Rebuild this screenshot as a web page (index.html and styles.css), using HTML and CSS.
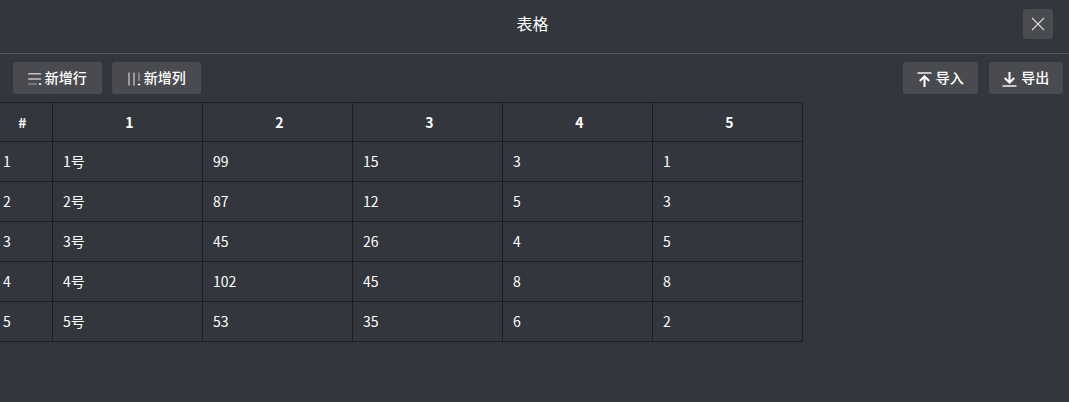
FILE: index.html
```html
<!DOCTYPE html>
<html lang="zh-CN">
<head>
    <meta charset="UTF-8">
    <title>表格</title>
    <link rel="stylesheet" href="styles.css">
</head>
<body>
    <div class="header">
        <span class="title">表格</span>
        <button class="close" aria-label="关闭">
            <svg width="14" height="14" viewBox="0 0 14 14"><path d="M1 1L13 13M13 1L1 13" stroke="#d8d8da" stroke-width="1.1" fill="none"/></svg>
        </button>
    </div>
    <div class="toolbar">
        <div class="group group-add">
            <button class="btn btn-add">
                <svg width="15" height="12" viewBox="0 0 15 12"><path d="M0.250 0.800h12.700M0.250 6h12.700" stroke="#c4c4c7" stroke-width="1.600" fill="none"/><path d="M0.250 11h8.500" stroke="#85858a" stroke-width="1.600" fill="none"/><path d="M10.800 11h2.400M12 10v2" stroke="#fff" stroke-width="1" fill="none"/></svg>
                <span>新增行</span>
            </button>
            <button class="btn btn-add">
                <svg width="15" height="14" viewBox="0 0 15 14"><path d="M2 0.500v13M7 0.500v13" stroke="#a5a5a9" stroke-width="1.800" fill="none"/><path d="M12 0.500v8.500" stroke="#85858a" stroke-width="1.800" fill="none"/><path d="M10.800 12.500h2.400M12 11.500v2" stroke="#fff" stroke-width="1" fill="none"/></svg>
                <span>新增列</span>
            </button>
        </div>
        <div class="group">
            <button class="btn btn-io">
                <svg width="15" height="15" viewBox="0 0 15 15"><path d="M0.500 1h14" stroke="#fff" stroke-width="1.400" fill="none"/><path d="M7.500 15V4.500M2.800 9l4.700-4.700L12.200 9" stroke="#fff" stroke-width="2" fill="none"/></svg>
                <span>导入</span>
            </button>
            <button class="btn btn-io">
                <svg width="15" height="15" viewBox="0 0 15 15"><path d="M0.500 14h14" stroke="#fff" stroke-width="1.400" fill="none"/><path d="M7.500 0v10.500M2.800 6l4.700 4.700L12.200 6" stroke="#fff" stroke-width="2" fill="none"/></svg>
                <span>导出</span>
            </button>
        </div>
    </div>
    <table class="grid">
        <thead>
            <tr><th class="index">#</th><th>1</th><th>2</th><th>3</th><th>4</th><th>5</th></tr>
        </thead>
        <tbody>
            <tr><td>1</td><td>1号</td><td>99</td><td>15</td><td>3</td><td>1</td></tr>
            <tr><td>2</td><td>2号</td><td>87</td><td>12</td><td>5</td><td>3</td></tr>
            <tr><td>3</td><td>3号</td><td>45</td><td>26</td><td>4</td><td>5</td></tr>
            <tr><td>4</td><td>4号</td><td>102</td><td>45</td><td>8</td><td>8</td></tr>
            <tr><td>5</td><td>5号</td><td>53</td><td>35</td><td>6</td><td>2</td></tr>
        </tbody>
    </table>
</body>
</html>
```

FILE: styles.css
```css
body {
    margin: 0;
    height: 402px;
    overflow: hidden;
    background: #33363d;
    color: #fff;
    font-family: "Noto Sans CJK SC", sans-serif;
    font-size: 14px;
}
button {
    font-family: inherit;
    color: #fff;
    border: none;
    cursor: pointer;
}
.header {
    height: 53px;
    display: flex;
    align-items: center;
    justify-content: center;
    position: relative;
    border-bottom: 1px solid #55575c;
}
.title {
    font-size: 16px;
    margin: -7px 4px 0 0;
}
.close {
    position: absolute;
    top: 9px;
    right: 16px;
    width: 30px;
    height: 30px;
    padding: 0;
    border-radius: 3px;
    background: #4a4b50;
    display: flex;
    align-items: center;
    justify-content: center;
}
.toolbar {
    height: 48px;
    padding: 8px 6px 8px 13px;
    box-sizing: border-box;
    display: flex;
    justify-content: space-between;
    align-items: flex-start;
}
.group {
    display: flex;
    gap: 11px;
}
.group-add {
    gap: 10.500px;
}
.btn {
    height: 32px;
    padding: 0;
    border-radius: 3px;
    background: #4a4b50;
    font-size: 14px;
    font-weight: 500;
    display: flex;
    align-items: center;
    justify-content: center;
}
.btn span {
    margin-bottom: 2px;
}
.btn svg {
    margin-top: 2px;
}
.btn-add {
    width: 88.500px;
    gap: 2px;
}
.btn-io {
    width: 74.500px;
    gap: 4px;
}
.grid {
    margin-left: -8px;
    border-collapse: collapse;
    table-layout: fixed;
    width: 810px;
}
.grid th, .grid td {
    border: 1px solid #1d1e22;
    width: 150px;
    height: 40px;
    box-sizing: border-box;
    font-size: 14px;
}
.grid th {
    height: 39px;
    padding: 0 8px 0 12px;
    font-weight: 700;
    text-align: center;
}
.grid td {
    padding: 0 10px 2px;
    text-align: left;
}
.grid .index {
    width: 60px;
    padding: 0 10px;
}
```
